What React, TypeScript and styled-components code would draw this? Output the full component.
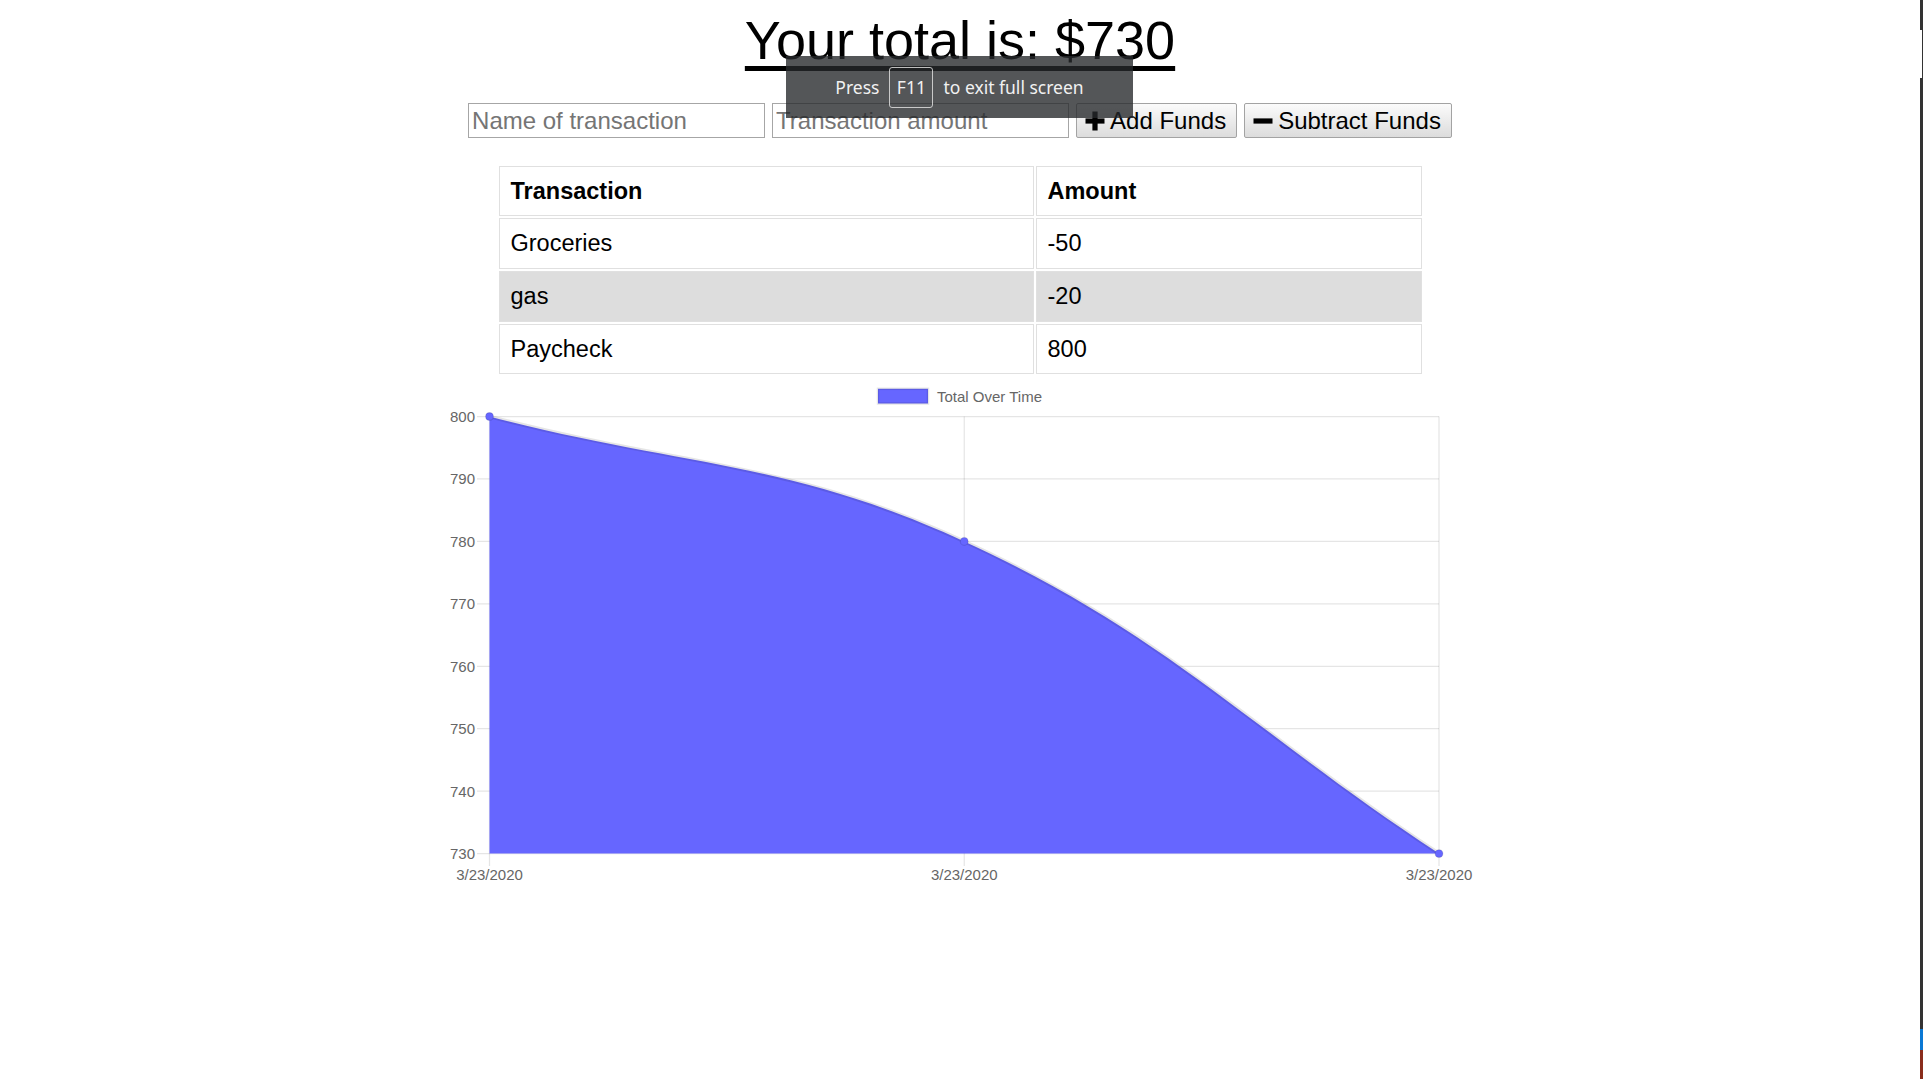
import React from "react";
import styled, { createGlobalStyle } from "styled-components";

const GlobalStyle = createGlobalStyle`
  html, body {
    margin: 0;
    padding: 0;
    background: #ffffff;
    overflow: hidden;
  }
  body {
    font-family: "Liberation Sans", Arial, sans-serif;
    color: #000;
  }
`;

const Screen = styled.div`
  display: flex;
  width: 1923px;
  height: 1079px;
`;

const Page = styled.main`
  position: relative;
  flex: 1;
  display: flex;
  flex-direction: column;
  align-items: center;
  background: #ffffff;
`;

const EdgeStrip = styled.div`
  width: 3px;
  display: flex;
  flex-direction: column;
`;

const EdgeSegment = styled.div<{ $h?: number; $bg: string; $line?: boolean }>`
  height: ${(p) => (p.$h ? `${p.$h}px` : "auto")};
  flex: ${(p) => (p.$h ? "none" : "1")};
  background: ${(p) => p.$bg};
  box-shadow: ${(p) => (p.$line ? "inset -1px 0 0 #333333" : "none")};
`;

const Title = styled.h1`
  margin: 10px 0 0;
  font-size: 54px;
  line-height: 60px;
  font-weight: normal;
  text-decoration: underline;
  text-decoration-thickness: 4.5px;
  text-underline-offset: 7px;
`;

const Toast = styled.div`
  position: absolute;
  top: 56px;
  left: calc(50% - 174px);
  width: 347px;
  height: 62px;
  display: flex;
  align-items: center;
  justify-content: center;
  gap: 10px;
  background: rgba(38, 40, 43, 0.79);
  color: #f1f1f1;
  font-family: "Noto Sans", "Open Sans", sans-serif;
  font-size: 17.5px;
`;

const KeyCap = styled.span`
  box-sizing: border-box;
  width: 44px;
  height: 41px;
  display: flex;
  align-items: center;
  justify-content: center;
  border: 1px solid rgba(230, 230, 230, 0.8);
  border-radius: 3px;
`;

const Form = styled.form`
  margin-top: 33px;
  display: flex;
  gap: 7px;
`;

const Input = styled.input`
  box-sizing: border-box;
  width: 297px;
  height: 35px;
  padding: 0 3px;
  border: 1px solid #a6a6a6;
  border-radius: 0;
  font-family: "Liberation Sans", Arial, sans-serif;
  font-size: 24px;
  color: #000;
  outline: none;
  &::placeholder {
    color: #757575;
  }
`;

const Button = styled.button`
  box-sizing: border-box;
  height: 35px;
  padding: 0 10px 0 8px;
  display: flex;
  align-items: center;
  gap: 5px;
  border: 1px solid #a3a3a3;
  border-radius: 2px;
  background: linear-gradient(#fbfbfb, #dcdcdc);
  font-family: "Liberation Sans", Arial, sans-serif;
  font-size: 24px;
  color: #000;
`;

const IconSvg = styled.svg`
  width: 20px;
  height: 20px;
  flex: none;
`;

const Table = styled.table`
  margin-top: 25.6px;
  width: 927px;
  border-collapse: separate;
  border-spacing: 2px;
  font-size: 23.5px;
`;

const Row = styled.tr<{ $shaded?: boolean }>`
  background: ${(p) => (p.$shaded ? "#dddddd" : "transparent")};
`;

const HeadCell = styled.th<{ $w?: number }>`
  width: ${(p) => (p.$w ? `${p.$w}px` : "auto")};
  box-sizing: border-box;
  padding: 0 11px;
  line-height: 48.7px;
  text-align: left;
  font-weight: bold;
  border: 1px solid #e0e0e0;
`;

const Cell = styled.td`
  padding: 0 11px;
  line-height: 48.7px;
  border: 1px solid #e0e0e0;
`;

const ChartSvg = styled.svg`
  display: block;
  margin-top: 4px;
  width: 1040px;
  height: 510px;
  font-family: "Liberation Sans", Arial, sans-serif;
`;

const PlusIcon = () => (
  <IconSvg viewBox="0 0 20 20">
    <rect x="7.4" y="0.5" width="5.2" height="19" fill="#000" />
    <rect x="0.5" y="7.4" width="19" height="5.2" fill="#000" />
  </IconSvg>
);

const MinusIcon = () => (
  <IconSvg viewBox="0 0 20 20">
    <rect x="0.5" y="7.4" width="19" height="5.2" fill="#000" />
  </IconSvg>
);

const transactions = [
  { name: "Groceries", value: "-50" },
  { name: "gas", value: "-20" },
  { name: "Paycheck", value: "800" },
];

const X0 = 49.5;
const X1 = 524.25;
const X2 = 999;
const TOP = 36.5;
const STEP = 6.244;
const yOf = (v: number) => TOP + (800 - v) * STEP;
const BOTTOM = yOf(730);
const yTicks = [800, 790, 780, 770, 760, 750, 740, 730];
const xTicks = [X0, X1, X2];

const curve = `M${X0} ${yOf(800)} C239.4 86.4 348.2 80.3 ${X1} ${yOf(780)} C728 255.1 809.1 348.7 ${X2} ${BOTTOM}`;
const area = `${curve} L${X0} ${BOTTOM} Z`;

const Chart = () => (
  <ChartSvg viewBox="0 0 1040 510">
    <rect x="438" y="8.8" width="50" height="14.7" fill="#6666ff" stroke="rgba(0,0,0,0.1)" strokeWidth="2.5" />
    <text x="497" y="16.5" fontSize="15" fill="#666" dominantBaseline="central">
      Total Over Time
    </text>
    {yTicks.map((v) => (
      <g key={v}>
        <line x1="37" x2={X2} y1={yOf(v)} y2={yOf(v)} stroke="rgba(0,0,0,0.1)" strokeWidth="1.25" />
        <text x="35" y={yOf(v)} fontSize="15" fill="#666" textAnchor="end" dominantBaseline="central">
          {v}
        </text>
      </g>
    ))}
    {xTicks.map((x) => (
      <g key={x}>
        <line x1={x} x2={x} y1={TOP} y2={BOTTOM + 12.5} stroke="rgba(0,0,0,0.1)" strokeWidth="1.25" />
        <text x={x} y="494.5" fontSize="15" fill="#666" textAnchor="middle" dominantBaseline="central">
          3/23/2020
        </text>
      </g>
    ))}
    <path d={area} fill="#6666ff" />
    <path d={curve} fill="none" stroke="rgba(0,0,0,0.1)" strokeWidth="3.75" />
    {[
      [X0, yOf(800)],
      [X1, yOf(780)],
      [X2, BOTTOM],
    ].map(([x, y]) => (
      <circle key={x} cx={x} cy={y} r="3.9" fill="#6666ff" stroke="rgba(0,0,0,0.1)" strokeWidth="1.25" />
    ))}
  </ChartSvg>
);

export default function App() {
  return (
    <>
      <GlobalStyle />
      <Screen>
        <Page>
          <Title>Your total is: $730</Title>
          <Form onSubmit={(e) => e.preventDefault()}>
            <Input type="text" placeholder="Name of transaction" />
            <Input type="number" placeholder="Transaction amount" />
            <Button type="button">
              <PlusIcon />
              Add Funds
            </Button>
            <Button type="button">
              <MinusIcon />
              Subtract Funds
            </Button>
          </Form>
          <Table>
            <thead>
              <Row>
                <HeadCell $w={535}>Transaction</HeadCell>
                <HeadCell>Amount</HeadCell>
              </Row>
            </thead>
            <tbody>
              {transactions.map((t, i) => (
                <Row key={t.name} $shaded={i === 1}>
                  <Cell>{t.name}</Cell>
                  <Cell>{t.value}</Cell>
                </Row>
              ))}
            </tbody>
          </Table>
          <Chart />
          <Toast>
            <span>Press</span>
            <KeyCap>F11</KeyCap>
            <span>to exit full screen</span>
          </Toast>
        </Page>
        <EdgeStrip>
          <EdgeSegment $h={30} $bg="#333333" />
          <EdgeSegment $h={48} $bg="#ffffff" $line />
          <EdgeSegment $bg="#333333" />
          <EdgeSegment $h={21} $bg="#0a78d4" />
          <EdgeSegment $h={29} $bg="#8a2d1c" />
        </EdgeStrip>
      </Screen>
    </>
  );
}
